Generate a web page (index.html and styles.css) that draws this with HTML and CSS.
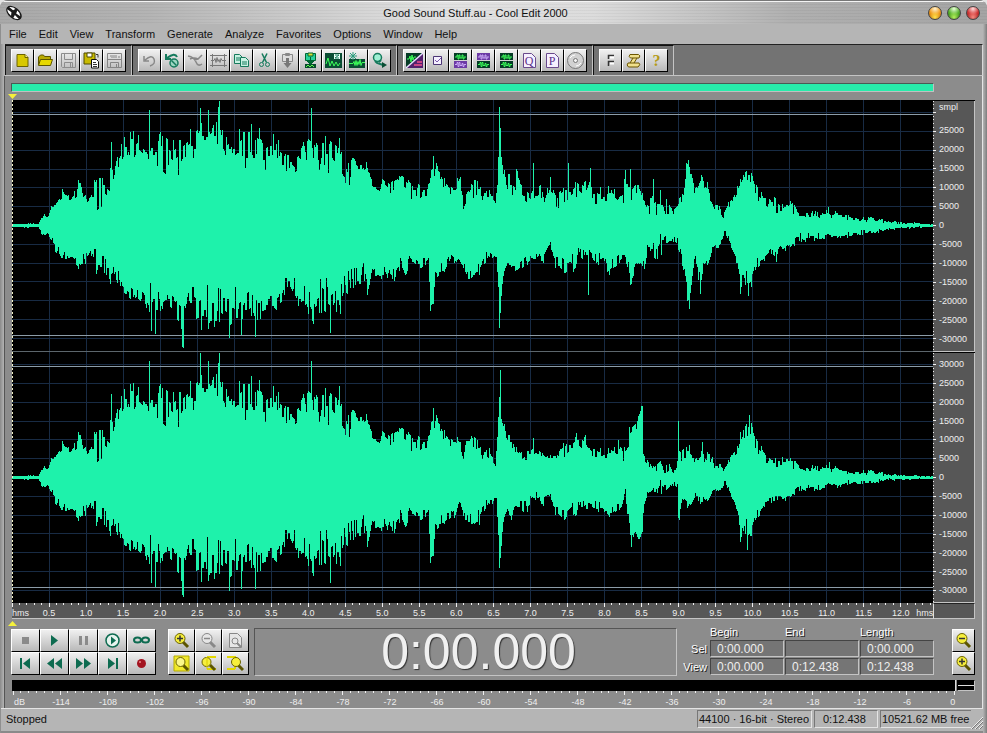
FILE: index.html
```html
<!DOCTYPE html>
<html lang="en">
<head>
    <meta charset="UTF-8">
    <meta name="viewport" content="width=device-width, initial-scale=1.0">
    <title>Good Sound Stuff.au - Cool Edit 2000</title>
    <link rel="stylesheet" href="styles.css">
</head>
<body>
<div class="window">
    <header class="titlebar">
        <svg class="app-icon" viewBox="0 0 18 16"><g transform="rotate(40 9 8)"><ellipse cx="9" cy="8" rx="9" ry="5.500" fill="#1a1a1a"/><path d="M1.500 6.500q3-3 6-2.500l-1 2.500zM10 4q4 0 6 2.500l-5 .5zM1.500 9.500l5-.5 2 3q-5 0-7-2.500zM11 9l5.500.5q-2 2.500-5 2.500z" fill="#fff"/></g></svg>
        <h1>Good Sound Stuff.au - Cool Edit 2000</h1>
        <div class="window-buttons">
            <button class="orb orange" aria-label="Minimize"></button>
            <button class="orb green" aria-label="Maximize"></button>
            <button class="orb red" aria-label="Close"></button>
        </div>
    </header>

    <nav class="menu">
        <button>File</button>
        <button>Edit</button>
        <button>View</button>
        <button>Transform</button>
        <button>Generate</button>
        <button>Analyze</button>
        <button>Favorites</button>
        <button>Options</button>
        <button>Window</button>
        <button>Help</button>
    </nav>

    <div class="toolbar">
        <div class="group">
            <button class="tool" aria-label="New"><svg viewBox="0 0 17 17"><path d="M3 2.500h8l3 3v9h-11z" fill="#d8c800" stroke="#6b6300"/><path d="M11 2.500v3h3" fill="#fff58a" stroke="#6b6300"/></svg></button>
            <button class="tool" aria-label="Open"><svg viewBox="0 0 17 17"><path d="M1.500 13V5l2-2h3l1 1.500h6V7" fill="#b8aa00" stroke="#5c5500"/><path d="M1.500 13.500l2-6h12l-2 6z" fill="#e6d800" stroke="#5c5500"/></svg></button>
            <button class="tool" aria-label="Save"><svg viewBox="0 0 17 17"><path d="M1.500 1.500h14v14h-13l-1-1zM4.500 1.500v6h8v-6M4.500 15.500v-5h8v5M10.500 11v4" fill="none" stroke="#8c8c8c"/></svg></button>
            <button class="tool" aria-label="Save as"><svg viewBox="0 0 17 17"><path d="M1 1h11v11H1z" fill="#c9bb00" stroke="#4f4a00"/><path d="M4 1h5v4H4z" fill="#fff" stroke="#4f4a00"/><path d="M8.500 7.500h5l2 2v6.500h-7z" fill="#fff" stroke="#111"/><path d="M10 10.500h3M10 12.500h4M10 14.500h4M13 2.500h2v3" fill="none" stroke="#333"/></svg></button>
            <button class="tool" aria-label="Save selection"><svg viewBox="0 0 17 17"><path d="M1.500 1.500h14v14h-14zM1 7.500h15M4.500 15V10.500h8V15M4 4h1m1-1v3m2-3v3m2-3v3m2-1h2M10.500 12v3" fill="none" stroke="#858585"/></svg></button>
        </div>
        <div class="group">
            <button class="tool" aria-label="Undo"><svg viewBox="0 0 17 17"><path d="M3 4v5h5M4 8q7-6 9-1t-4 7" fill="none" stroke="#888" stroke-width="1.500"/></svg></button>
            <button class="tool" aria-label="Undo disabled"><svg viewBox="0 0 17 17"><path d="M2 2v5h5M3 6q8-6 10-1" fill="none" stroke="#157a5c" stroke-width="2"/><circle cx="10" cy="11" r="4" fill="#9ed6c2" stroke="#157a5c" stroke-width="1.500"/><path d="M7.500 8.500l5 5" stroke="#157a5c" stroke-width="1.500"/></svg></button>
            <button class="tool" aria-label="Repeat"><svg viewBox="0 0 17 17"><path d="M1 4q6 1 8 6t6 2M15 3l-4 4-4 1M3 7q4-2 8 0" fill="none" stroke="#888" stroke-width="1.500"/></svg></button>
            <button class="tool" aria-label="Trim"><svg viewBox="0 0 17 17"><path d="M0 3.500h17M0 13.500h17M2.500 2v13M14.500 2v13M1 8.500h3l1-2 1 4 1-5 1 4 1-2 1 3 1-4 1 2h4" fill="none" stroke="#777"/></svg></button>
            <button class="tool" aria-label="Copy"><svg viewBox="0 0 17 17"><path d="M1.500 2.500h5l3 3v6h-8z" fill="#c9f2e3" stroke="#157a5c"/><path d="M7.500 5.500h5l3 3v6h-8z" fill="#c9f2e3" stroke="#157a5c"/><path d="M3 6h4M3 8h4M9 10h5M9 12h5" stroke="#157a5c"/></svg></button>
            <button class="tool" aria-label="Cut"><svg viewBox="0 0 17 17"><path d="M6 1.500l4.500 9M11 1.500l-4.500 9" stroke="#157a5c" stroke-width="1.500"/><circle cx="5.500" cy="12.500" r="2" fill="none" stroke="#157a5c"/><circle cx="11.500" cy="12.500" r="2" fill="none" stroke="#157a5c"/></svg></button>
            <button class="tool" aria-label="Paste"><svg viewBox="0 0 17 17"><path d="M3.500 2.500h10v7h-10zM6.500 1.500h4v2h-4z" fill="#ddd" stroke="#888"/><path d="M8.500 6v6" stroke="#777" stroke-width="3"/><path d="M4.500 11h8l-4 5z" fill="#777"/></svg></button>
            <button class="tool" aria-label="Paste to new"><svg viewBox="0 0 17 17"><path d="M3.500 1.500h10v7h-10z" fill="#2ad19b" stroke="#063"/><path d="M6 1h5v3H6z" fill="#d8e03a" stroke="#063"/><path d="M3 12h11v4H3z" fill="#064a2c"/><path d="M8.500 5v4M5 9h7l-3.500 3.500z" stroke="#063" fill="#063"/><path d="M4 15l2-2 2 2 2-2 2 2" fill="none" stroke="#5dff4a"/></svg></button>
            <button class="tool" aria-label="Mix paste"><svg viewBox="0 0 17 17"><path d="M0 1h17v15H0z" fill="#0a4d33"/><path d="M1 12l2-6 2 8 2-5 2 5 2-4 2 4 2-3" fill="none" stroke="#3dff5a"/><path d="M8.500 1.500h7v6h-7z" fill="#e9fff6" stroke="#0a4d33"/><path d="M10 3h4l-4 3h4" fill="none" stroke="#157a5c"/></svg></button>
            <button class="tool" aria-label="Edit zero crossings"><svg viewBox="0 0 17 17"><path d="M1 7h16v9H1z" fill="#0a4d33"/><path d="M1 11.500h4l1-2 1 4 1-5 1 5 1-4 1 3 1-5 1 6 1-3h3" fill="none" stroke="#3dff5a"/><path d="M5 0v8M1 4h8M2 1l6 6M8 1L2 7" stroke="#2a9d7c"/></svg></button>
            <button class="tool" aria-label="Find"><svg viewBox="0 0 17 17"><circle cx="6.500" cy="5.500" r="4" fill="#9ff0d4" stroke="#157a5c" stroke-width="1.500"/><path d="M4 9l2 2 6 2M10 8l-2 2" fill="none" stroke="#157a5c" stroke-width="2"/><path d="M11 10l5 3-5 3z" fill="#0a4d33"/></svg></button>
        </div>
        <div class="group">
            <button class="tool" aria-label="Spectral view"><svg viewBox="0 0 17 17"><path d="M0 1h17v15H0z" fill="#063b26"/><path d="M17 1v15H0z" fill="#52206e"/><path d="M0 16L17 1" stroke="#e8e0ff" stroke-width="1.500"/><path d="M1 7h2l1-3 1 6 1-7 1 5 1-3h2" fill="none" stroke="#3dff5a"/><path d="M8 13h8M11 10h5" stroke="#f0508c" stroke-width="1.500"/></svg></button>
            <button class="tool" aria-label="Show options"><svg viewBox="0 0 17 17"><path d="M4.500 4.500h8v8h-8z" fill="#f5f0ff" stroke="#4c3576"/><path d="M6 8l2 2 4-4" fill="none" stroke="#7a58ab"/></svg></button>
            <button class="tool" aria-label="Edit left channel"><svg viewBox="0 0 17 17"><path d="M2 1h13v7H2z" fill="#063b26"/><path d="M2 9h13v7H2z" fill="#6c3aa5"/><path d="M3 5h2V3h1v4h1V3h1v3h2V3h1v4h1V5h2" fill="none" stroke="#3dff5a"/><path d="M3 12.500h2v-2h1v4h1v-4h1v3h2v-2h1v3h1v-2h2" fill="none" stroke="#c9a8f5"/></svg></button>
            <button class="tool" aria-label="Edit right channel"><svg viewBox="0 0 17 17"><path d="M2 1h13v7H2z" fill="#6c3aa5"/><path d="M2 9h13v7H2z" fill="#063b26"/><path d="M3 5h2V3h1v4h1V3h1v3h2V3h1v4h1V5h2" fill="none" stroke="#c9a8f5"/><path d="M3 12.500h2v-2h1v4h1v-4h1v3h2v-2h1v3h1v-2h2" fill="none" stroke="#3dff5a"/></svg></button>
            <button class="tool" aria-label="Edit both channels"><svg viewBox="0 0 17 17"><path d="M2 1h13v7H2zM2 9h13v7H2z" fill="#063b26"/><path d="M3 5h2V3h1v4h1V3h1v3h2V3h1v4h1V5h2M3 12.500h2v-2h1v4h1v-4h1v3h2v-2h1v3h1v-2h2" fill="none" stroke="#3dff5a"/></svg></button>
            <button class="tool" aria-label="Cue list"><svg viewBox="0 0 17 17"><path d="M2.500 1.500h8l4 4v10h-12z" fill="#f6f0ff" stroke="#6a4a8c"/><text class="glyph" x="8" y="13" fill="#5b2f8a">Q</text></svg></button>
            <button class="tool" aria-label="Play list"><svg viewBox="0 0 17 17"><path d="M2.500 1.500h8l4 4v10h-12z" fill="#f6f0ff" stroke="#6a4a8c"/><text class="glyph" x="8" y="13" fill="#5b2f8a">P</text></svg></button>
            <button class="tool" aria-label="CD player"><svg viewBox="0 0 17 17"><circle cx="8.500" cy="8.500" r="8" fill="#d2d2d2" stroke="#777"/><circle cx="8.500" cy="8.500" r="2" fill="#f5f5f5" stroke="#777"/><path d="M3 6q2-3 5-3M14 11q-2 3-5 3" fill="none" stroke="#fff"/></svg></button>
        </div>
        <div class="group">
            <button class="tool" aria-label="Frequency"><svg viewBox="0 0 17 17"><path d="M6.500 7V3.500H12M6.500 14V9.500H12" fill="none" stroke="#333" stroke-width="1.500"/><path d="M8 5.500h4M8 11.500h4" stroke="#fff" stroke-width="2"/></svg></button>
            <button class="tool" aria-label="Scripts"><svg viewBox="0 0 17 17"><path d="M5 2.500h8.500q2.500 1 .5 3.500h-2l-3 5h5q2 1.500-1 4H3.500Q1 13 3 11h2l3-5H5.500Q3 4.500 5 2.500z" fill="#f0e08c" stroke="#6b5500"/><path d="M8 6h4M5 11h4" stroke="#6b5500"/></svg></button>
            <button class="tool" aria-label="Help"><svg viewBox="0 0 17 17"><text class="glyph bold" x="8.500" y="14" fill="#b39a18">?</text></svg></button>
        </div>
    </div>

    <main class="workspace">
        <div class="overview"></div>
        <div class="cursor-strip"><svg viewBox="0 0 9 6"><path d="M0 0h9L4.500 5z" fill="#f5f13c"/></svg></div>

        <section class="editor">
            <svg id="wave" class="wave" viewBox="0 0 921 503" preserveAspectRatio="none" role="img" aria-label="Stereo waveform"></svg>
            <div class="scales">
                <div class="scale">
                    <svg class="side-ticks" id="ticksLeft" viewBox="0 0 4 251" preserveAspectRatio="none"></svg>
                    <span class="unit">smpl</span>
                    <span>25000</span><span>20000</span><span>15000</span><span>10000</span><span>5000</span><span>0</span>
                    <span>-5000</span><span>-10000</span><span>-15000</span><span>-20000</span><span>-25000</span><span>-30000</span>
                    <i class="rest"></i>
                </div>
                <div class="scale">
                    <svg class="side-ticks" id="ticksRight" viewBox="0 0 4 251" preserveAspectRatio="none"></svg>
                    <i class="rest"></i>
                    <span>30000</span><span>25000</span><span>20000</span><span>15000</span><span>10000</span><span>5000</span><span>0</span>
                    <span>-5000</span><span>-10000</span><span>-15000</span><span>-20000</span><span>-25000</span><span>-30000</span>
                    <i class="rest"></i>
                </div>
            </div>
            <div class="ruler">
                <svg class="top-ticks" id="ticksTime" viewBox="0 0 921 5" preserveAspectRatio="none"></svg>
                <div class="ruler-labels">
                    <span class="first">hms</span>
                    <span>0.5</span><span>1.0</span><span>1.5</span><span>2.0</span><span>2.5</span><span>3.0</span>
                    <span>3.5</span><span>4.0</span><span>4.5</span><span>5.0</span><span>5.5</span><span>6.0</span>
                    <span>6.5</span><span>7.0</span><span>7.5</span><span>8.0</span><span>8.5</span><span>9.0</span>
                    <span>9.5</span><span>10.0</span><span>10.5</span><span>11.0</span><span>11.5</span><span>12.0</span>
                    <span class="last">hms</span>
                </div>
            </div>
            <div class="corner"></div>
        </section>
        <div class="cursor-strip bottom"><svg viewBox="0 0 9 6"><path d="M0 5h9L4.500 0z" fill="#f5f13c"/></svg></div>

        <section class="controls">
            <div class="transport">
                <button class="tool" aria-label="Stop"><svg viewBox="0 0 17 17"><path d="M5 5h7v7H5z" fill="#8a8a8a"/></svg></button>
                <button class="tool" aria-label="Play"><svg viewBox="0 0 17 17"><path d="M5 3l7 5.500L5 14z" fill="#0d6b50"/></svg></button>
                <button class="tool" aria-label="Pause"><svg viewBox="0 0 17 17"><path d="M4 4h3v9H4zM10 4h3v9h-3z" fill="#8a8a8a"/></svg></button>
                <button class="tool" aria-label="Play to end"><svg viewBox="0 0 17 17"><circle cx="8.500" cy="8.500" r="6.500" fill="#e6f3ee" stroke="#0d6b50" stroke-width="1.500"/><path d="M7 4.500l5 4-5 4z" fill="#0d6b50"/></svg></button>
                <button class="tool" aria-label="Loop"><svg viewBox="0 0 17 17"><ellipse cx="4.500" cy="8" rx="3.500" ry="2.500" fill="none" stroke="#0d6b50" stroke-width="2"/><ellipse cx="12.500" cy="8" rx="3.500" ry="2.500" fill="none" stroke="#0d6b50" stroke-width="2"/></svg></button>
                <button class="tool" aria-label="Go to beginning"><svg viewBox="0 0 17 17"><path d="M3 3h2v11H3zM13 3v11L6 8.500z" fill="#0d6b50"/></svg></button>
                <button class="tool" aria-label="Rewind"><svg viewBox="0 0 17 17"><path d="M8 3v11L1 8.500zM16 3v11L9 8.500z" fill="#0d6b50"/></svg></button>
                <button class="tool" aria-label="Fast forward"><svg viewBox="0 0 17 17"><path d="M1 3v11l7-5.500zM9 3v11l7-5.500z" fill="#0d6b50"/></svg></button>
                <button class="tool" aria-label="Go to end"><svg viewBox="0 0 17 17"><path d="M4 3v11l7-5.500zM12 3h2v11h-2z" fill="#0d6b50"/></svg></button>
                <button class="tool" aria-label="Record"><svg viewBox="0 0 17 17"><circle cx="8.500" cy="8.500" r="4.500" fill="#a31420"/><circle cx="7" cy="7" r="1" fill="#e88"/></svg></button>
            </div>
            <div class="zoom">
                <button class="tool" aria-label="Zoom in"><svg viewBox="0 0 17 17"><path d="M10 10l5 5" stroke="#5c5500" stroke-width="3"/><circle cx="7" cy="6.500" r="5" fill="#f7ef3c" stroke="#6b6300"/><path d="M4 6.500h6M7 3.500v6" stroke="#333" stroke-width="1.500"/></svg></button>
                <button class="tool" aria-label="Zoom out"><svg viewBox="0 0 17 17"><path d="M10 10l5 5" stroke="#888" stroke-width="3"/><circle cx="7" cy="6.500" r="5" fill="#e6e6e6" stroke="#888"/><path d="M4 6.500h6" stroke="#888" stroke-width="1.500"/></svg></button>
                <button class="tool" aria-label="Zoom full"><svg viewBox="0 0 17 17"><path d="M2.500 1.500h8l4 4v10h-12z" fill="#e6e6e6" stroke="#888"/><path d="M10 11l4 4" stroke="#888" stroke-width="2"/><circle cx="8" cy="9" r="3" fill="none" stroke="#888"/></svg></button>
                <button class="tool" aria-label="Zoom to selection"><svg viewBox="0 0 17 17"><path d="M1 1h15v15H1z" fill="#f0e82c" stroke="#b5ab00"/><path d="M10 10l5 5" stroke="#5c5500" stroke-width="3"/><circle cx="7.500" cy="7" r="4.500" fill="#fbf78a" stroke="#6b6300"/></svg></button>
                <button class="tool" aria-label="Zoom to left edge"><svg viewBox="0 0 17 17"><path d="M7 2h9M7 14h9" stroke="#e3d800" stroke-width="2"/><path d="M10 10l5 5" stroke="#5c5500" stroke-width="3"/><circle cx="6.500" cy="7" r="4.500" fill="#f7ef3c" stroke="#6b6300"/><path d="M7 2v12" stroke="#d8cc00"/></svg></button>
                <button class="tool" aria-label="Zoom to right edge"><svg viewBox="0 0 17 17"><path d="M0 2h8M0 14h8M8 1v13" stroke="#e3d800" stroke-width="2"/><path d="M11 10l5 5" stroke="#5c5500" stroke-width="3"/><circle cx="9" cy="7" r="4.500" fill="#f7ef3c" stroke="#6b6300"/></svg></button>
            </div>
            <output class="clock">0:00.000</output>
            <div class="times">
                <span></span>
                <span class="column-name" id="begin">Begin</span>
                <span class="column-name" id="end">End</span>
                <span class="column-name" id="length">Length</span>
                <span class="row-name" id="sel">Sel</span>
                <input type="text" value="0:00.000" aria-labelledby="sel begin">
                <input type="text" value="" aria-labelledby="sel end">
                <input type="text" value="0:00.000" aria-labelledby="sel length">
                <span class="row-name" id="view">View</span>
                <input type="text" value="0:00.000" aria-labelledby="view begin">
                <input type="text" value="0:12.438" aria-labelledby="view end">
                <input type="text" value="0:12.438" aria-labelledby="view length">
            </div>
            <div class="vertical-zoom">
                <button class="tool" aria-label="Vertical zoom out"><svg viewBox="0 0 17 17"><path d="M10 10l5 5" stroke="#5c5500" stroke-width="3"/><circle cx="7" cy="6.500" r="5" fill="#f7ef3c" stroke="#6b6300"/><path d="M4 6.500h6" stroke="#333" stroke-width="1.500"/></svg></button>
                <button class="tool" aria-label="Vertical zoom in"><svg viewBox="0 0 17 17"><path d="M10 10l5 5" stroke="#5c5500" stroke-width="3"/><circle cx="7" cy="6.500" r="5" fill="#f7ef3c" stroke="#6b6300"/><path d="M4 6.500h6M7 3.500v6" stroke="#333" stroke-width="1.500"/></svg></button>
            </div>
        </section>

        <section class="levels">
            <div class="meter"><div class="bar"></div><div class="clip"></div></div>
            <svg class="top-ticks" id="ticksLevel" viewBox="0 0 964 4" preserveAspectRatio="none"></svg>
            <div class="level-labels">
                <span class="first">dB</span>
                <span>-114</span><span>-108</span><span>-102</span><span>-96</span><span>-90</span><span>-84</span><span>-78</span>
                <span>-72</span><span>-66</span><span>-60</span><span>-54</span><span>-48</span><span>-42</span><span>-36</span>
                <span>-30</span><span>-24</span><span>-18</span><span>-12</span><span>-6</span><span>0</span>
            </div>
        </section>
    </main>

    <footer class="status">
        <span class="message">Stopped</span>
        <span class="cell format">44100 · 16-bit · Stereo</span>
        <span class="cell duration">0:12.438</span>
        <span class="cell space">10521.62 MB free</span>
        <svg class="grip" viewBox="0 0 12 14"><path d="M0 14L12 2M4 14l8-8M8 14l4-4" stroke="#eee"/><path d="M1 14L12 3M5 14l7-7M9 14l3-3" stroke="#777"/></svg>
    </footer>
</div>
<script src="wave.js"></script>
</body>
</html>
```

FILE: styles.css
```css
/* Window */
* {
    box-sizing: border-box;
}
body {
    margin: 0;
    background-color: #e4e4e4;
    font-family: "Liberation Sans", Arial, sans-serif;
    font-size: 11px;
    color: #111;
}
button {
    border: none;
    padding: 0;
    margin: 0;
    font: inherit;
    color: inherit;
    background: none;
}
.window {
    display: flex;
    flex-direction: column;
    min-height: 100vh;
    background: linear-gradient(to right, #8a8a8a, #b4b4b4 4px, #b4b4b4 calc(100% - 4px), #7d7d7d);
    border-radius: 8px 8px 0 0;
    overflow: hidden;
}
.titlebar {
    display: flex;
    align-items: center;
    height: 24px;
    padding: 0 7px 0 5px;
    border-top: 1px solid #777;
    box-shadow: inset 0 1px 0 #f4f4f4;
    background:
        repeating-linear-gradient(to bottom, rgba(0, 0, 0, 0.04) 0, rgba(0, 0, 0, 0.04) 1px, transparent 1px, transparent 3px),
        linear-gradient(to right, #a8a8a8, #b4b4b4 15%, #e2e2e2 45%, #dcdcdc 60%, #b0b0b0 80%, #a4a4a4);
}
.titlebar h1 {
    flex: 1;
    margin: 0;
    font-size: 11px;
    font-weight: normal;
    text-align: center;
}
.app-icon {
    width: 18px;
    height: 16px;
}
.window-buttons {
    display: flex;
    gap: 5px;
}
.orb {
    width: 14px;
    height: 14px;
    border-radius: 50%;
    border: 1px solid #444;
}
.orange {
    background: radial-gradient(circle at 50% 85%, #ffe34d, transparent 50%), radial-gradient(circle at 50% 15%, #fff3d0, #f09a1c 50%, #a85600);
}
.green {
    background: radial-gradient(circle at 50% 85%, #b4f25c, transparent 50%), radial-gradient(circle at 50% 15%, #e8ffd8, #55b02a 50%, #245c0c);
}
.red {
    background: radial-gradient(circle at 50% 85%, #f78a80, transparent 50%), radial-gradient(circle at 50% 15%, #ffdcdc, #d03434 50%, #7a1212);
}
.menu {
    display: flex;
    align-items: center;
    gap: 12px;
    height: 20px;
    padding-left: 8px;
    margin: 0 4px 0 1px;
    background-color: #b5b5b5;
}

/* Toolbar */
.toolbar {
    display: flex;
    height: 32px;
    margin: 0 4px 0 5px;
    border-top: 1px solid #222;
    border-bottom: 1px solid #c4c4c4;
    border-right: 1px solid #d8d8d8;
    background-color: #737373;
}
.group {
    display: flex;
    align-items: center;
    padding: 0 5px;
    border: solid;
    border-width: 1px 1px 0 1px;
    border-color: #111 #c4c4c4 #c4c4c4 #111;
}
.tool {
    display: flex;
    align-items: center;
    justify-content: center;
    width: 23px;
    height: 23px;
    background: linear-gradient(#f0f0f0, #b9b9b9);
    border: 1px solid;
    border-color: #fff #000 #000 #fff;
}
.tool svg {
    width: 17px;
    height: 17px;
}
.glyph {
    font-family: "Liberation Serif", serif;
    font-size: 12px;
    text-anchor: middle;
}
.bold {
    font-size: 16px;
    font-weight: bold;
}

/* Waveform area */
.workspace {
    flex: 1;
    display: flex;
    flex-direction: column;
    margin: 0 4px;
    padding: 7px 7px 0 6px;
    border-left: 1px solid #555;
    border-right: 1px solid #e4e4e4;
    background-color: #8c8c8c;
}
.overview {
    height: 9px;
    margin-right: 41px;
    background-color: #27ecab;
    border: 1px solid;
    border-color: #4a5a55 #c0c0c0 #c0c0c0 #4a5a55;
}
.cursor-strip {
    height: 8px;
    padding-top: 2px;
    margin-left: -3px;
}
.cursor-strip.bottom {
    height: 9px;
}
.cursor-strip svg {
    display: block;
    width: 9px;
    height: 6px;
}
.editor {
    flex: 1;
    display: grid;
    grid-template-columns: minmax(0, 1fr) 42px;
    grid-template-rows: 1fr 16px;
    padding-left: 1px;
}
.wave {
    display: block;
    width: 100%;
    height: 100%;
    min-height: 300px;
    background-color: #000;
}
.scales {
    display: flex;
    flex-direction: column;
    color: #eee;
    font-size: 9px;
}
.scale {
    flex: 1;
    display: flex;
    flex-direction: column;
    position: relative;
    background-color: #575757;
    box-shadow: inset 0 1px 0 #000, inset -1px -1px 0 #c4c4c4;
}
.scale span {
    flex: 100 1 0;
    display: flex;
    align-items: center;
    min-height: 0;
    padding-left: 6px;
    line-height: 10px;
}
.scale .unit {
    flex-grow: 110;
    align-items: flex-start;
    line-height: 14px;
}
.rest {
    flex: 16 1 0;
}
.side-ticks {
    position: absolute;
    left: 0;
    top: 0;
    width: 4px;
    height: 100%;
}
.ruler {
    position: relative;
    background-color: #575757;
    border-bottom: 1px solid #c4c4c4;
    color: #eee;
    font-size: 9px;
}
.top-ticks {
    display: block;
    width: 100%;
    height: 5px;
}
.ruler-labels,
.level-labels {
    display: flex;
    line-height: 10px;
    white-space: nowrap;
}
.ruler-labels span,
.level-labels span {
    flex: 1000 1 0;
    display: flex;
    justify-content: center;
    min-width: 0;
}
.ruler-labels .first,
.level-labels .first {
    flex-grow: 500;
    justify-content: flex-start;
}
.ruler-labels .last {
    flex-grow: 376;
    justify-content: flex-end;
}
.corner {
    background-color: #575757;
    border: 1px solid;
    border-color: #222 #c4c4c4 #c4c4c4 #ddd;
}

/* Transport, clock and times */
.controls {
    display: flex;
    align-items: center;
    height: 48px;
}
.transport {
    display: grid;
    grid-template-columns: repeat(5, 29px);
}
.zoom {
    display: grid;
    grid-template-columns: repeat(3, 27px);
    margin: 0 5px 0 12px;
}
.transport .tool,
.zoom .tool {
    width: 100%;
}
.clock {
    flex: 1;
    height: 48px;
    padding-left: 26px;
    border: 1px solid;
    border-color: #555 #c4c4c4 #c4c4c4 #555;
    color: #f0f0f0;
    font-size: 50px;
    line-height: 46px;
    text-align: center;
    text-shadow: 1px 1px 1px #333;
}
.times {
    display: grid;
    grid-template-columns: 32px 74px 74px 74px;
    grid-template-rows: 12px 18px 18px;
    column-gap: 1px;
    color: #fff;
    text-shadow: 1px 1px 0 #222;
}
.times .column-name {
    line-height: 8px;
}
.times .row-name {
    align-self: center;
    text-align: right;
    padding-right: 2px;
    line-height: 12px;
}
.times input {
    width: 100%;
    height: 17px;
    padding: 0 0 0 6px;
    margin: 0;
    border: 1px solid;
    border-color: #444 #c4c4c4 #c4c4c4 #444;
    border-radius: 0;
    background-color: #757575;
    color: #eee;
    font-family: inherit;
    font-size: 12px;
}
.vertical-zoom {
    display: grid;
    margin-left: 18px;
}

/* Level meter */
.levels {
    padding-top: 4px;
    height: 32px;
    color: #eee;
    font-size: 9px;
}
.meter {
    display: flex;
    gap: 1px;
    height: 11px;
    padding-left: 1px;
}
.bar {
    flex: 1;
    background-color: #000;
    border-right: 1px solid #ddd;
}
.clip {
    width: 18px;
    border: 1px solid;
    border-color: #000 #c4c4c4 #c4c4c4 #000;
    background: linear-gradient(#000 4px, #ddd 4px, #ddd 5px, #000 5px);
}
.levels .top-ticks {
    height: 4px;
}
.level-labels {
    padding: 2px 0 0 3px;
}
.level-labels span:last-child {
    flex-grow: 947;
}

/* Status bar */
.status {
    display: flex;
    align-items: center;
    gap: 2px;
    height: 25px;
    margin: 0 4px 0 1px;
    padding: 0 0 2px 5px;
    border-top: 1px solid #e4e4e4;
    border-bottom: 2px solid #8a8a8a;
    background-color: #b5b5b5;
    white-space: nowrap;
}
.message {
    flex: 1;
}
.cell {
    height: 18px;
    line-height: 16px;
    padding-left: 1px;
    border: 1px solid;
    border-color: #777 #e4e4e4 #e4e4e4 #777;
}
.format {
    width: 115px;
}
.duration {
    width: 64px;
    padding-left: 8px;
}
.space {
    width: 91px;
    border-right: none;
}
.grip {
    width: 12px;
    height: 14px;
    margin-left: -2px;
    align-self: flex-end;
}
```

FILE: wave.js
```js
const NS = 'http://www.w3.org/2000/svg';
const LEFT = 12; // envelope points are counted from the window edge

// each point: x, lowest level, highest level (px from the zero line)
const upStart = [
    [12,1,1],[38,1,2],[40,4,5],[44,10,12],[47,7,8],[50,13,15],[52,17,23],[58,19,30],[63,27,36],[70,24,27],[76,30,38],[78,42,45],[80,42,45],
    [83,24,28],[90,26,33],[97,23,50],[103,26,47],[108,27,42],[111,60,70],[114,43,53],[118,50,70],[125,62,87],[132,60,90],[138,73,91],
    [145,66,80],[155,66,82],[163,62,93],[172,52,80],[180,60,87],[190,72,93],[200,76,98],[208,76,100],[219,80,100],[225,68,85],[233,66,88],
    [243,66,95],[256,67,97],[263,62,88],[276,66,88],[282,58,70],[295,56,66],[302,62,80],[308,76,100],[313,74,96],[320,60,83],[330,60,88],
    [339,48,80],[345,38,63],[352,52,70],[360,50,63],[367,54,67],[372,37,40],[380,33,38],[383,38,57],[390,36,48],[397,43,56],[405,35,48],
    [410,30,40],[417,26,42],[427,29,36],[430,43,63],[433,50,62],[440,42,58],[446,40,43],[455,26,40]
];
const downStart = [
    [12,1,1],[38,1,2],[41,6,9],[44,9,9],[47,6,8],[50,11,13],[53,15,22],[60,23,32],[67,31,34],[73,29,36],[80,32,44],[85,30,38],[90,23,25],
    [95,28,46],[102,28,43],[108,32,48],[111,48,63],[115,42,56],[120,54,68],[128,64,73],[133,68,84],[139,60,75],[145,67,80],[149,68,100],
    [153,65,104],[158,70,85],[165,67,78],[170,65,96],[178,74,98],[183,78,100],[188,63,80],[195,72,103],[203,68,98],[212,68,98],[220,70,92],
    [229,72,104],[240,70,106],[245,66,85],[250,60,83],[255,68,98],[260,68,90],[268,66,85],[277,68,88],[283,50,72],[290,50,63],[297,62,78],
    [305,58,76],[312,66,95],[320,60,82],[330,62,98],[335,62,83],[341,64,85],[345,52,68],[353,46,60],[360,46,62],[363,36,46],[367,56,76],
    [371,43,50],[378,40,52],[385,44,51],[392,50,63],[396,36,48],[400,32,45],[405,44,54],[410,29,36],[420,33,44],[428,30,40],[430,80,84],
    [433,76,78],[435,45,50],[445,36,48]
];

const channels = [
    {
        zero: 125,
        up: upStart.concat([
            [459,30,49],[462,19,37],[468,32,44],[480,29,42],[490,26,33],[495,21,24],[497,30,40],[498,66,70],[500,95,118],[501,68,72],[503,50,54],
            [507,36,53],[513,36,58],[522,30,43],[530,23,34],[540,22,42],[544,13,24],[550,26,45],[558,20,30],[565,27,38],[577,33,47],[586,30,42],
            [588,36,50],[590,42,56],[593,24,34],[607,24,38],[621,22,30],[624,28,44],[632,30,46],[637,36,44],[641,28,32],[645,22,29],[650,13,27],
            [656,14,28],[664,14,24],[669,14,24],[672,11,14],[679,22,30],[683,27,30],[685,46,56],[688,58,70],[690,46,56],[694,32,38],[697,36,44],
            [701,44,54],[707,35,42],[710,25,28],[714,14,17],[718,17,25],[722,7,9],[726,12,18],[732,18,30],[737,32,38],[740,38,47],[744,47,54],
            [749,48,58],[753,40,46],[757,28,38],[764,19,27],[774,15,26],[782,14,20],[792,14,23],[799,9,13],[810,9,14],[820,7,12],[828,9,15],
            [837,7,13],[849,6,10],[857,4,7],[870,4,8],[890,2,4],[910,1,3],[924,1,1],[933,0,1]
        ]),
        down: downStart.concat([
            [450,28,35],[460,31,38],[464,38,44],[468,46,54],[475,42,50],[482,33,45],[490,24,30],[496,30,34],[498,60,70],[499,95,102],[501,70,76],
            [503,46,52],[507,32,38],[511,37,48],[520,35,42],[527,29,38],[535,30,36],[543,29,36],[549,17,27],[555,29,40],[565,32,48],[571,35,54],
            [577,24,33],[583,28,42],[586,19,30],[595,30,38],[605,28,36],[607,34,48],[615,30,42],[623,27,33],[628,34,42],[630,56,60],[632,54,60],
            [634,38,42],[640,32,36],[644,34,44],[648,19,32],[655,22,38],[662,9,25],[668,7,22],[673,13,21],[680,18,36],[684,36,56],[687,55,72],
            [689,66,80],[691,56,62],[694,30,36],[697,37,53],[700,46,65],[703,38,43],[707,36,42],[712,20,25],[717,16,22],[722,12,16],[724,4,6],
            [728,12,18],[735,25,34],[738,40,60],[740,65,73],[743,44,50],[748,52,68],[751,54,60],[756,36,44],[762,28,36],[770,22,28],[776,24,34],
            [780,18,26],[785,16,24],[792,13,20],[800,9,15],[812,9,15],[820,8,13],[835,8,12],[848,7,11],[860,4,8],[870,4,8],[885,3,5],
            [905,1,3],[933,0,1]
        ]),
        upSpikes: { 111: 83, 149: 115, 200: 117, 208: 115, 218: 118, 219: 124, 311: 117, 339: 87, 433: 69, 499: 118, 533: 62, 568: 62, 590: 57, 625: 55, 630: 56, 653: 46, 660: 35, 774: 28, 828: 18 },
        downSpikes: { 151: 105, 155: 108, 182: 121, 183: 122, 229: 112, 241: 109, 255: 111, 312: 95, 330: 107, 499: 102, 588: 69, 689: 83, 748: 70, 776: 36 }
    },
    {
        zero: 377,
        up: upStart.concat([
            [459,25,37],[462,14,25],[465,34,42],[471,36,42],[478,24,34],[485,20,32],[490,16,26],[495,10,13],[497,30,40],[498,58,62],[500,90,107],
            [501,58,62],[504,44,52],[508,34,44],[513,32,42],[517,18,24],[522,18,29],[530,22,28],[537,19,30],[545,16,20],[552,16,22],[558,22,24],
            [563,22,32],[568,28,38],[575,30,42],[585,28,40],[595,22,29],[605,19,27],[612,19,28],[620,21,32],[625,18,28],[628,28,32],[629,46,54],
            [636,50,56],[640,60,68],[642,62,70],[643,22,40],[648,14,19],[652,4,8],[656,8,16],[660,10,20],[664,4,8],[669,9,16],[672,3,5],
            [676,8,12],[678,22,30],[682,17,26],[689,22,30],[692,14,19],[698,16,23],[702,20,32],[707,16,24],[712,18,24],[714,7,10],[720,11,14],
            [724,5,8],[728,12,16],[732,18,26],[737,23,30],[740,30,48],[744,38,52],[749,50,62],[752,40,50],[757,27,36],[762,22,28],[766,14,20],
            [774,12,18],[787,11,19],[796,10,16],[803,7,10],[812,7,11],[820,6,10],[829,7,12],[838,6,9],[850,3,5],[870,3,7],[890,1,3],[905,1,2],[933,0,1]
        ]),
        down: downStart.concat([
            [455,30,38],[460,18,27],[464,34,42],[475,38,49],[480,28,44],[487,24,30],[490,17,26],[496,19,22],[498,56,66],[499,84,90],[501,68,74],
            [503,40,46],[507,26,32],[511,38,49],[515,22,28],[525,22,33],[533,14,28],[540,22,28],[548,15,25],[555,27,36],[564,32,42],[572,28,38],
            [580,26,34],[590,24,31],[600,26,33],[608,30,38],[615,27,34],[622,24,31],[625,10,20],[628,34,42],[631,62,68],[634,52,56],[638,58,62],
            [642,48,54],[644,20,26],[650,12,17],[657,10,15],[660,5,14],[665,6,16],[670,3,12],[677,9,18],[678,38,42],[680,30,34],[682,18,22],
            [686,20,28],[691,22,30],[695,16,20],[699,18,25],[706,22,27],[711,13,17],[717,8,12],[722,9,13],[724,2,4],[728,10,14],[735,22,30],
            [738,36,44],[740,62,67],[744,42,50],[748,48,66],[750,56,61],[755,38,44],[760,28,36],[765,20,26],[776,16,26],[785,16,22],[792,13,18],
            [797,9,13],[808,8,12],[818,8,13],[828,5,8],[837,5,9],[848,3,6],[870,3,6],[885,1,3],[905,1,2],[933,0,1]
        ]),
        upSpikes: { 111: 83, 149: 116, 200: 124, 208: 116, 218: 114, 219: 124, 311: 116, 339: 91, 433: 69, 500: 107, 533: 39, 576: 44, 618: 37, 641: 71, 678: 56, 689: 32, 702: 35, 749: 62, 829: 15 },
        downSpikes: { 151: 105, 155: 109, 182: 117, 183: 119, 229: 113, 241: 111, 255: 111, 312: 95, 330: 105, 499: 90, 631: 69, 679: 42, 747: 72 }
    }
];

let seed;
function random() {
    seed = (seed * 16807) % 2147483647;
    return seed / 2147483647;
}

function levels(points, spikes) {
    const result = [];
    let i = 0, hold = 0, r = 0;
    for (let x = LEFT; x < 933; x++) {
        while (i < points.length - 2 && points[i + 1][0] <= x) i++;
        const a = points[i], b = points[i + 1];
        const t = Math.min(1, (x - a[0]) / (b[0] - a[0]));
        const low = a[1] + (b[1] - a[1]) * t;
        const high = a[2] + (b[2] - a[2]) * t;
        if (hold-- <= 0) {
            const kind = random();
            r = random();
            if (kind < 0.12) r = -0.3; // narrow notch
            if (kind > 0.88) r = 1.15; // narrow peak
            hold = kind > 0.2 && kind < 0.7 ? 1 : 0;
        }
        result.push(spikes[x] || Math.round(low + (high - low) * r));
    }
    return result;
}

function addPath(svg, d, color) {
    const path = document.createElementNS(NS, 'path');
    path.setAttribute('d', d);
    path.setAttribute('stroke', color);
    path.setAttribute('fill', 'none');
    path.setAttribute('shape-rendering', 'crispEdges');
    svg.appendChild(path);
}

function drawWave() {
    const svg = document.getElementById('wave');
    let grid = '';
    for (let n = 1; n < 25; n++) {
        grid += `M${Math.round(n * 37.02) + 0.5} 0V503`;
    }
    channels.forEach(c => {
        for (let n = -6; n <= 6; n++) {
            grid += `M0 ${Math.round(c.zero + n * 18.8) + 0.5}H921`;
        }
    });
    addPath(svg, grid, '#182b44');
    addPath(svg, 'M0 14.5H921M0 235.5H921M0 266.5H921M0 487.5H921', '#8c9ca8');
    addPath(svg, 'M0 251.5H921', '#5c666c');

    channels.forEach(c => {
        // both channels share most of their peaks
        seed = 7;
        const up = levels(c.up, c.upSpikes);
        const down = levels(c.down, c.downSpikes);
        let d = '';
        up.forEach((value, x) => {
            d += `M${x + 0.5} ${c.zero - value}V${c.zero + down[x] + 1}`;
        });
        addPath(svg, d, '#1ef2ab');
    });

    // playback cursor
    let cursor = '';
    for (let y = 0; y < 503; y += 4) cursor += `M0.5 ${y}v2`;
    addPath(svg, cursor, '#f4f4c8');
}

function drawTicks(id, count, step, major, longTick, shortTick, start) {
    let d = '';
    for (let n = 0; n <= count; n++) {
        d += `M${Math.floor(start + n * step) + 0.5} 0v${n % major === 0 ? longTick : shortTick}`;
    }
    addPath(document.getElementById(id), d, '#f0f0f0');
}

function drawSideTicks(id) {
    let d = '';
    for (let n = -33; n <= 33; n++) {
        d += `M0 ${Math.round(125 + n * 3.77) + 0.5}h${n % 5 === 0 ? 3 : 1}`;
    }
    addPath(document.getElementById(id), d, '#f0f0f0');
}

drawWave();
drawTicks('ticksTime', 124, 7.404, 5, 4, 2, 0);
drawTicks('ticksLevel', 120, 7.842, 6, 4, 2, 2);
drawSideTicks('ticksLeft');
drawSideTicks('ticksRight');
```
